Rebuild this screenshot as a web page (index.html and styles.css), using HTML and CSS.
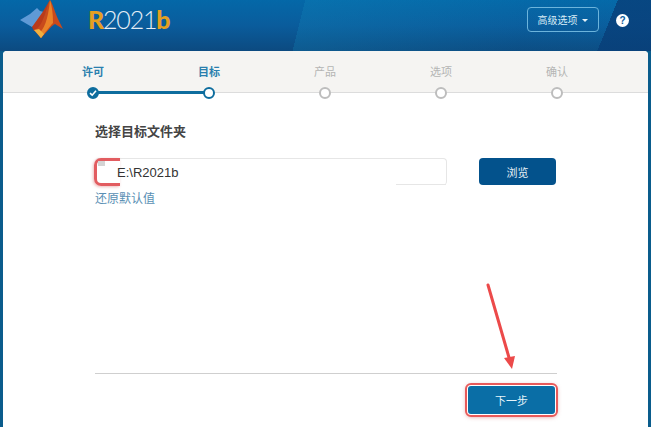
FILE: index.html
```html
<!DOCTYPE html>
<html lang="zh">
<head>
  <meta charset="UTF-8" />
  <title>MATLAB R2021b</title>
  <link rel="stylesheet" href="styles.css">
</head>

<body>
  <header class="cabecera">
    <svg class="logo" width="44" height="40" viewBox="0 0 44 40">
      <path d="M0 20 L10 14 L17 8 L20 11 L24 12 L15 25 L12 27 Z" fill="#5f9ad6"/>
      <path d="M12 27 L22 13 L30 0 L24 18 L19 31 L14 31 Z" fill="#b93a1a"/>
      <path d="M30 0 C33 4 34 10 38 19 L43 29 L35 24 C31 26 26 33 21 38 L14 30 C20 28 22 22 25 14 C27 8 28 3 30 0 Z" fill="#c84a1c"/>
      <path d="M30 0 C32 6 33 14 33 23 C30 26 25 33 21 38 L18 34 C24 30 28 20 30 0 Z" fill="#ea8228"/>
      <path d="M14 30 L21 38 L24 34 L19 29 Z" fill="#f0b040"/>
    </svg>
    <div class="version"><b>R</b>2021<b>b</b></div>
    <button class="avanzado">高级选项 <span class="flecha"></span></button>
    <span class="ayuda">?</span>
  </header>

  <main class="panel">
    <div class="pasos">
      <div class="paso hecho"><span>许可</span><i class="punto">
        <svg width="8" height="8" viewBox="0 0 8 8"><path d="M1 4.2 L3.2 6.2 L7 1.8" fill="none" stroke="#fff" stroke-width="1.6"/></svg>
      </i></div>
      <div class="paso activo"><span>目标</span><i class="punto"></i></div>
      <div class="paso"><span>产品</span><i class="punto"></i></div>
      <div class="paso"><span>选项</span><i class="punto"></i></div>
      <div class="paso"><span>确认</span><i class="punto"></i></div>
    </div>

    <section class="contenido">
      <h2>选择目标文件夹</h2>
      <div class="fila">
        <div class="campo">E:\R2021b</div>
        <button class="examinar">浏览</button>
      </div>
      <a class="restaurar">还原默认值</a>
    </section>

    <footer class="pie">
      <button class="siguiente">下一步</button>
    </footer>
  </main>

  <!-- anotaciones rojas encima de la captura -->
  <div class="marca"></div>
  <svg class="anotacion" width="40" height="96" viewBox="0 0 40 96">
    <path d="M7 4 L29 80" stroke="#ec4a4a" stroke-width="3" stroke-linecap="round"/>
    <path d="M23 77 L34 75 L31 88 Z" fill="#ec4a4a"/>
  </svg>
</body>
</html>
```

FILE: styles.css
```css
body {
  margin: 0;
  height: 427px;
  overflow: hidden;
  position: relative;
  display: flex;
  flex-direction: column;
  font-family: "Liberation Sans", "Noto Sans CJK SC", sans-serif;
  background-color: #0a5c8c;
}

.cabecera {
  height: 51px;
  flex: none;
  display: flex;
  align-items: flex-start;
  box-sizing: border-box;
  background:
    linear-gradient(112deg, transparent 92%, rgba(8, 62, 120, 0.8) 92%),
    linear-gradient(104deg, transparent 46%, rgba(20, 140, 190, 0.25) 46%, rgba(20, 140, 190, 0.05) 80%),
    linear-gradient(180deg, #0468a8 0%, #0a5c9c 50%, #0c4a80 100%);
}

.logo {
  margin-left: 20px;
  flex: none;
}

.version {
  margin: 2px 0 0 24px;
  font-family: Lato, sans-serif;
  font-weight: 300;
  font-size: 25px;
  line-height: 34px;
  letter-spacing: -1.2px;
  color: #e4eef6;
}

.version b {
  color: #e5a021;
  font-weight: 900;
}

.avanzado {
  margin: 7px 0 0 auto;
  width: 72px;
  height: 25px;
  padding: 0;
  background: transparent;
  border: 1px solid #6cb4dc;
  border-radius: 4px;
  color: #d8ecf6;
  font-family: inherit;
  font-size: 10px;
}

.flecha {
  display: inline-block;
  margin-left: 2px;
  vertical-align: 2px;
  border: 3px solid transparent;
  border-top-color: #e6f2f8;
  border-bottom: 0;
}

.ayuda {
  margin: 14px 22px 0 17px;
  width: 13px;
  height: 13px;
  border-radius: 50%;
  background: #fff;
  color: #0a5c9c;
  font-size: 10px;
  font-weight: bold;
  line-height: 13px;
  text-align: center;
}

.panel {
  flex: 1;
  margin: 0 3px;
  background: #fff;
  border-radius: 4px 4px 0 0;
  display: flex;
  flex-direction: column;
}

.pasos {
  height: 42px;
  flex: none;
  box-sizing: border-box;
  padding-left: 32px;
  display: flex;
  background: #f5f4f2;
  border-bottom: 1px solid #dcdcdc;
  border-radius: 4px 4px 0 0;
}

.paso {
  width: 116px;
  position: relative;
  display: flex;
  flex-direction: column;
  align-items: center;
  padding-top: 14px;
  font-size: 11px;
  line-height: 14px;
  color: #b4b4b4;
}

.punto {
  position: absolute;
  top: 36px;
  left: 52px;
  width: 12px;
  height: 12px;
  box-sizing: border-box;
  border: 2px solid #bdbdbd;
  border-radius: 50%;
  background: #fff;
  display: flex;
  align-items: center;
  justify-content: center;
}

.hecho, .activo {
  color: #2a7fae;
  font-weight: bold;
}

.hecho .punto, .activo .punto {
  border: 2.5px solid #0e6d9e;
  z-index: 1;
}

.hecho .punto {
  background: #0e6d9e;
}

/* linea azul entre pasos */
.hecho::after {
  content: "";
  position: absolute;
  top: 40px;
  left: 58px;
  width: 116px;
  height: 3px;
  background: #0e6d9e;
}

.contenido {
  flex: 1;
  padding: 30px 92px 0;
}

.contenido h2 {
  margin: 0 0 17px;
  font-size: 13px;
  line-height: 18px;
  font-weight: bold;
  color: #444;
}

.fila {
  display: flex;
  justify-content: space-between;
}

.campo {
  position: relative;
  width: 352px;
  height: 27px;
  box-sizing: border-box;
  padding-left: 22px;
  border: 1px solid #e6e6e6;
  border-left: 0;
  border-bottom: 0;
  border-radius: 4px;
  font-size: 13px;
  line-height: 27px;
  color: #333;
}

.campo::after {
  content: "";
  position: absolute;
  right: 0;
  bottom: 0;
  width: 50px;
  height: 1px;
  background: #e6e6e6;
}

.examinar {
  width: 77px;
  height: 27px;
  padding: 0;
  background: #03528c;
  border: none;
  border-radius: 4px;
  color: #e6f0f6;
  font-family: inherit;
  font-size: 11px;
}

.restaurar {
  display: block;
  margin-top: 6px;
  font-size: 12px;
  line-height: 16px;
  color: #5a8fb4;
}

.pie {
  margin: 0 91px 0 92px;
  height: 54px;
  flex: none;
  box-sizing: border-box;
  padding-top: 10px;
  border-top: 1px solid #cfcfcf;
  display: flex;
  justify-content: flex-end;
}

.siguiente {
  width: 91px;
  height: 32px;
  padding: 0;
  background: #0a6ea6;
  border: 2px solid #fff;
  outline: 2px solid #e85a5a;
  outline-offset: -1px;
  border-radius: 5px;
  box-shadow: 0 1px 4px rgba(200, 60, 60, 0.5);
  color: #e6f4fa;
  font-family: inherit;
  font-size: 11px;
}

.marca {
  position: absolute;
  left: 94px;
  top: 158px;
  width: 26px;
  height: 28px;
  box-sizing: border-box;
  border: 3px solid #e25c60;
  border-right: 0;
  border-radius: 7px 0 0 7px;
  box-shadow: -1px 1px 3px rgba(200, 60, 60, 0.35);
}

.marca::before {
  content: "";
  position: absolute;
  left: 1px;
  top: 0;
  width: 7px;
  height: 5px;
  background: #d4d4d4;
}

.anotacion {
  position: absolute;
  left: 481px;
  top: 281px;
}
```
